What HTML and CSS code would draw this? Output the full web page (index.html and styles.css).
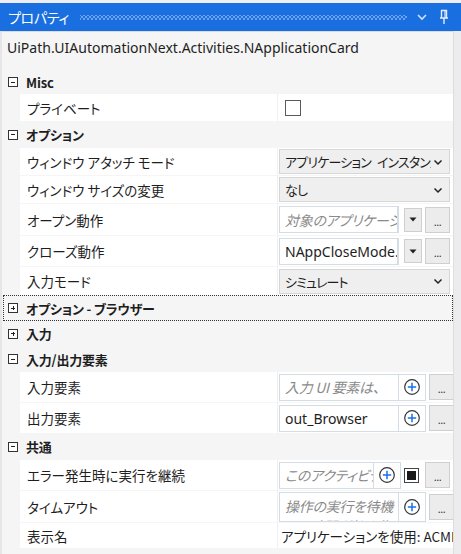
FILE: index.html
```html
<!DOCTYPE html>
<html lang="ja">
<head>
<meta charset="utf-8">
<link rel="stylesheet" href="styles.css">
</head>
<body>
<div class="window">
  <div class="titlebar">
    <span class="title">プロパティ</span>
    <span class="grip"></span>
    <svg class="tb-icon chev" width="12" height="10" viewBox="0 0 12 10"><path d="M2 3 L6 7 L10 3" fill="none" stroke="#cfe0ff" stroke-width="1.6"/></svg>
    <svg class="tb-icon pin" width="12" height="16" viewBox="0 0 12 16"><path d="M3.5 1.5 H8.5 V9 H3.5 Z M2 9 H10 M6 9 V15" fill="none" stroke="#e3edff" stroke-width="1.4"/><path d="M7 2 V9" stroke="#e3edff" stroke-width="1.2"/></svg>
  </div>
  <div class="body">
    <div class="panel">
      <div class="typename">UiPath.UIAutomationNext.Activities.NApplicationCard</div>

      <div class="cat h24"><span class="exp minus"></span><span class="cat-name">Misc</span></div>
      <div class="row h27"><div class="name">プライベート</div><div class="val"><span class="check"></span></div></div>

      <div class="cat h27"><span class="exp minus"></span><span class="cat-name">オプション</span></div>
      <div class="row h27"><div class="name">ウィンドウ アタッチ モード</div><div class="val"><div class="combo"><span class="combo-text">アプリケーション インスタンス</span><svg class="combo-chev" width="10" height="8" viewBox="0 0 10 8"><path d="M1.5 2.5 L5 6 L8.5 2.5" fill="none" stroke="#222" stroke-width="1.5"/></svg></div></div></div>
      <div class="row h27"><div class="name">ウィンドウ サイズの変更</div><div class="val"><div class="combo"><span class="combo-text">なし</span><svg class="combo-chev" width="10" height="8" viewBox="0 0 10 8"><path d="M1.5 2.5 L5 6 L8.5 2.5" fill="none" stroke="#222" stroke-width="1.5"/></svg></div></div></div>
      <div class="row h31"><div class="name">オープン動作</div><div class="val">
        <div class="input w119"><span class="ph">対象のアプリケーションを開く</span></div>
        <div class="btn drop"><svg width="8" height="5" viewBox="0 0 8 5"><path d="M0.5 0.5 H7.5 L4 4.5 Z" fill="#222"/></svg></div>
        <div class="btn dots">...</div>
      </div></div>
      <div class="row h30"><div class="name">クローズ動作</div><div class="val">
        <div class="input w119"><span class="txt">NAppCloseMode.Never</span></div>
        <div class="btn drop"><svg width="8" height="5" viewBox="0 0 8 5"><path d="M0.5 0.5 H7.5 L4 4.5 Z" fill="#222"/></svg></div>
        <div class="btn dots">...</div>
      </div></div>
      <div class="row h28"><div class="name">入力モード</div><div class="val"><div class="combo"><span class="combo-text">シミュレート</span><svg class="combo-chev" width="10" height="8" viewBox="0 0 10 8"><path d="M1.5 2.5 L5 6 L8.5 2.5" fill="none" stroke="#222" stroke-width="1.5"/></svg></div></div></div>

      <div class="cat h26 focus"><span class="exp plus"></span><span class="cat-name">オプション - ブラウザー</span></div>
      <div class="cat h25"><span class="exp plus"></span><span class="cat-name">入力</span></div>
      <div class="cat h26"><span class="exp minus"></span><span class="cat-name">入力/出力要素</span></div>
      <div class="row h30"><div class="name">入力要素</div><div class="val">
        <div class="input w147 addon"><span class="ph">入力 UI 要素は、</span><span class="add"><svg width="18" height="18" viewBox="0 0 18 18"><circle cx="9" cy="9" r="7.3" fill="none" stroke="#333" stroke-width="1.2"/><path d="M9 4.8 V13.2 M4.8 9 H13.2" stroke="#1a73e8" stroke-width="1.5"/></svg></span></div>
        <div class="btn dots">...</div>
      </div></div>
      <div class="row h30"><div class="name">出力要素</div><div class="val">
        <div class="input w147 addon"><span class="txt">out_Browser</span><span class="add"><svg width="18" height="18" viewBox="0 0 18 18"><circle cx="9" cy="9" r="7.3" fill="none" stroke="#333" stroke-width="1.2"/><path d="M9 4.8 V13.2 M4.8 9 H13.2" stroke="#1a73e8" stroke-width="1.5"/></svg></span></div>
        <div class="btn dots">...</div>
      </div></div>

      <div class="cat h27"><span class="exp minus"></span><span class="cat-name">共通</span></div>
      <div class="row h30"><div class="name">エラー発生時に実行を継続</div><div class="val">
        <div class="input w122 addon"><span class="ph">このアクティビティでエラーが</span><span class="add"><svg width="18" height="18" viewBox="0 0 18 18"><circle cx="9" cy="9" r="7.3" fill="none" stroke="#333" stroke-width="1.2"/><path d="M9 4.8 V13.2 M4.8 9 H13.2" stroke="#1a73e8" stroke-width="1.5"/></svg></span></div>
        <span class="blackcheck"></span>
        <div class="btn dots">...</div>
      </div></div>
      <div class="row h31"><div class="name">タイムアウト</div><div class="val">
        <div class="input w147 addon tall"><span class="ph two">操作の実行を待機する時間 (秒) を指定します</span><span class="add"><svg width="18" height="18" viewBox="0 0 18 18"><circle cx="9" cy="9" r="7.3" fill="none" stroke="#333" stroke-width="1.2"/><path d="M9 4.8 V13.2 M4.8 9 H13.2" stroke="#1a73e8" stroke-width="1.5"/></svg></span></div>
        <div class="btn dots">...</div>
      </div></div>
      <div class="row h25"><div class="name">表示名</div><div class="val"><span class="plain">アプリケーションを使用: ACME</span></div></div>
    </div>
    <div class="gutter"></div>
  </div>
</div>
</body>
</html>
```

FILE: styles.css
```css
* { box-sizing: border-box; }
html, body { margin: 0; padding: 0; }
body {
  width: 461px;
  height: 554px;
  overflow: hidden;
  background: #eeeef2;
  font-family: "Noto Sans", "Noto Sans CJK JP", sans-serif;
  font-size: 13px;
  color: #1e1e1e;
  font-feature-settings: "palt" 1;
}
.window {
  padding-top: 3px;
  height: 554px;
  display: flex;
  flex-direction: column;
}
.titlebar {
  height: 28px;
  background: #1a6fe0;
  display: flex;
  align-items: center;
  padding: 0 0 0 8px;
  color: #fff;
  flex: none;
}
.title {
  font-family: "Noto Sans CJK JP", sans-serif;
  font-size: 14px;
  letter-spacing: -0.3px;
  line-height: 1;
}
.grip {
  width: 327px;
  height: 5px;
  margin-left: 11px;
  background-image:
    radial-gradient(circle, #6ea3f0 0.8px, transparent 1.1px),
    radial-gradient(circle, #6ea3f0 0.8px, transparent 1.1px);
  background-size: 4px 4px, 4px 4px;
  background-position: 0 0, 2px 2px;
}
.tb-icon { display: block; }
.chev { margin-left: 9px; }
.pin { margin-left: 10px; }

.body {
  flex: 1;
  display: flex;
  min-height: 0;
}
.panel {
  width: 453px;
  background: #f5f5f5;
  border-left: 2px solid #e6e6e9;
  border-top: 1px solid #dcdce0;
  display: flex;
  flex-direction: column;
  overflow: hidden;
}
.gutter {
  flex: 1;
  background: #ececef;
  border-left: 1px solid #dedee2;
}
.typename {
  height: 38px;
  padding: 6px 0 0 5px;
  font-size: 14px;
  color: #1e1e1e;
  flex: none;
}

.cat {
  display: flex;
  align-items: center;
  padding-left: 6px;
  flex: none;
}
.cat.focus {
  outline: 1px dotted #333;
  outline-offset: -1px;
  margin-left: 1px;
  padding-left: 5px;
}
.cat-name {
  font-family: "Noto Sans CJK JP", sans-serif;
  font-weight: 700;
  font-size: 13px;
  letter-spacing: -0.2px;
  margin-left: 8px;
  color: #1e1e1e;
}
.exp {
  width: 10px;
  height: 10px;
  border: 1px solid #333;
  position: relative;
  flex: none;
  background: #fff;
}
.exp::before {
  content: "";
  position: absolute;
  left: 2px; top: 3.5px;
  width: 4px; height: 1px;
  background: #222;
}
.exp.plus::after {
  content: "";
  position: absolute;
  left: 3.5px; top: 2px;
  width: 1px; height: 4px;
  background: #222;
}

.row {
  display: flex;
  margin-left: 18px;
  flex: none;
  background: #fff;
}
.row + .row { margin-top: 1px; }
.name {
  width: 258px;
  flex: none;
  display: flex;
  align-items: center;
  padding-left: 7px;
  font-family: "Noto Sans CJK JP", sans-serif;
  font-size: 13.5px;
  color: #1e1e1e;
  border-right: 1px solid #f0f0f0;
}
.val {
  flex: 1;
  display: flex;
  align-items: center;
  padding-left: 1px;
  min-width: 0;
  overflow: hidden;
}
.h24 { height: 24px; }
.h25 { height: 25px; }
.h26 { height: 26px; }
.h27 { height: 27px; }
.h28 { height: 28px; }
.h30 { height: 30px; }
.h31 { height: 31px; }

.check {
  width: 16px; height: 16px;
  border: 1px solid #5a5a5a;
  margin-left: 6px;
  background: #fff;
}
.combo {
  width: 171px;
  height: 25px;
  background: #efefef;
  border: 1px solid #d6d6d6;
  display: flex;
  align-items: center;
  padding: 0 6px 0 5px;
  font-family: "Noto Sans CJK JP", sans-serif;
  font-size: 13px;
}
.combo-text {
  flex: 1;
  white-space: nowrap;
  overflow: hidden;
  letter-spacing: -0.85px;
  word-spacing: 4px;
}
.combo-chev { flex: none; display: block; margin-left: 2px; }

.input {
  height: 27px;
  border: 1px solid #d5dde4;
  border-right-width: 2px;
  background: #fff;
  display: flex;
  align-items: center;
  overflow: hidden;
  flex: none;
}
.w119 { width: 120px; }
.w122 { width: 122px; }
.w147 { width: 147px; }
.input .ph, .input .txt {
  flex: 1;
  min-width: 0;
  white-space: nowrap;
  overflow: hidden;
  padding-left: 5px;
  font-size: 14px;
}
.ph {
  color: #8a8a8a;
  font-style: italic;
  font-family: "Noto Sans CJK JP", sans-serif;
  letter-spacing: -0.3px;
}
.txt { color: #1e1e1e; }
.input.addon { border-right-width: 1px; }
.add {
  width: 27px;
  align-self: stretch;
  border-left: 1px solid #d5dde4;
  display: flex;
  align-items: center;
  justify-content: center;
  flex: none;
}
.add svg { display: block; }
.input.tall {
  height: 30px;
  align-items: stretch;
}
.ph.two {
  white-space: normal;
  line-height: 20px;
  padding-top: 3px;
  height: 28px;
  overflow: hidden;
  word-break: break-all;
}

.btn {
  background: #ececec;
  border: 1px solid #cfcfcf;
  flex: none;
  display: flex;
  justify-content: center;
}
.btn.drop {
  width: 18px;
  height: 24px;
  margin-left: 5px;
  align-items: center;
}
.btn.drop svg { display: block; }
.btn.dots {
  width: 25px;
  height: 26px;
  margin-left: 3px;
  align-items: flex-end;
  font-size: 11px;
  line-height: 1;
  padding-bottom: 5px;
  color: #333;
  letter-spacing: -0.5px;
}
.blackcheck {
  width: 15px; height: 15px;
  border: 1px solid #444;
  padding: 2px;
  margin-left: 3px;
  margin-right: 3px;
  background: #fff;
  flex: none;
  display: flex;
}
.blackcheck::before {
  content: "";
  flex: 1;
  background: #1a1a1a;
}
.plain {
  white-space: nowrap;
  padding-left: 2px;
  font-family: "Noto Sans CJK JP", sans-serif;
  font-size: 13.5px;
  letter-spacing: 0;
}
```
